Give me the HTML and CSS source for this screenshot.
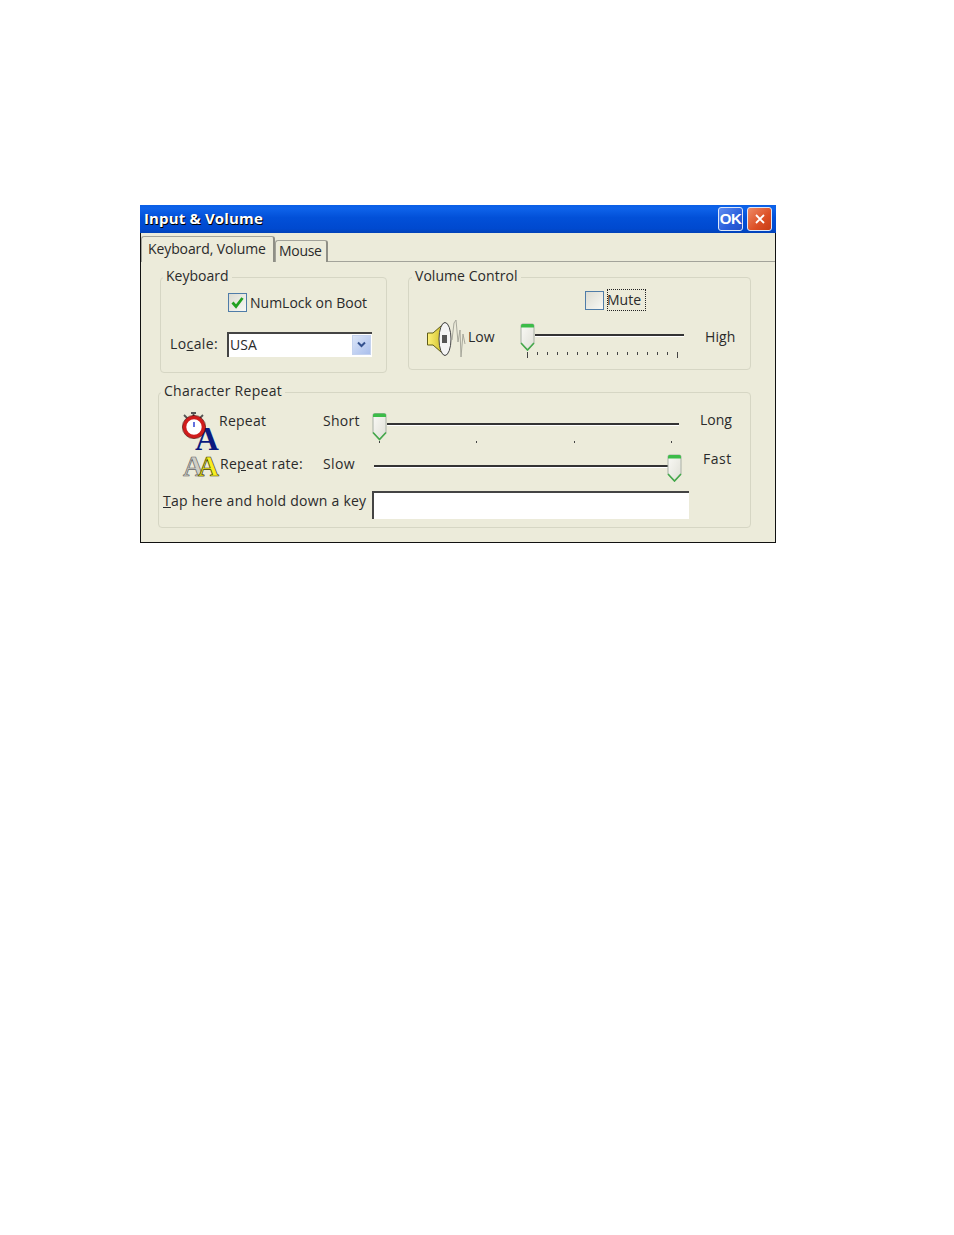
FILE: index.html
```html
<!DOCTYPE html>
<html lang="en">
<head>
<meta charset="utf-8">
<title>Input &amp; Volume</title>
<link rel="stylesheet" href="styles.css">
</head>
<body>
<svg class="defs" width="0" height="0">
  <defs>
    <linearGradient id="cone" x1="0" y1="0" x2="1" y2="0">
      <stop offset="0" stop-color="#fff27a"/>
      <stop offset="1" stop-color="#c9b81e"/>
    </linearGradient>
    <linearGradient id="thumbfill" x1="0" y1="0" x2="1" y2="1">
      <stop offset="0" stop-color="#fafaf6"/>
      <stop offset="1" stop-color="#dfdfd6"/>
    </linearGradient>
    <symbol id="thumb-shape" viewBox="0 0 15 28">
      <path d="M2.5 1 H12.5 Q14 1 14 2.5 V20 L7.5 27 L1 20 V2.5 Q1 1 2.5 1 Z" fill="url(#thumbfill)" stroke="#a9b0a6"/>
      <path d="M2.5 1 H12.5 Q14 1 14 2.5 V4.5 H1 V2.5 Q1 1 2.5 1 Z" fill="#3cbc48"/>
      <path d="M1 20 L7.5 27 L14 20" fill="none" stroke="#45a84c" stroke-width="1.7"/>
    </symbol>
  </defs>
</svg>
<main class="window">
  <header class="titlebar">
    <h1 class="title">Input &amp; Volume</h1>
    <div class="ok-btn">OK</div>
    <div class="close-btn">
      <svg width="12" height="12" viewBox="0 0 12 12"><path d="M2 2 L10 10 M10 2 L2 10" stroke="#fff" stroke-width="1.8" fill="none"/></svg>
    </div>
  </header>

  <nav class="tabs">
    <div class="tab tab-active">Keyboard, Volume</div>
    <div class="tab tab-plain">Mouse</div>
  </nav>

  <section class="panel">
    <div class="top-row">
      <fieldset class="group group-keyboard">
        <legend>Keyboard</legend>
        <div class="check-row numlock">
          <span class="checkbox">
            <svg width="15" height="15" viewBox="0 0 15 15"><path d="M2.5 7.5 L6 11.5 L12.5 3" stroke="#21a121" stroke-width="2.8" fill="none"/></svg>
          </span>
          <span class="check-label">NumLock on Boot</span>
        </div>
        <div class="locale-row">
          <span class="locale-label">Lo<u>c</u>ale:</span>
          <div class="combo">
            <span class="combo-value">USA</span>
            <span class="combo-btn">
              <svg width="9" height="7" viewBox="0 0 9 7"><path d="M1 1.5 L4.5 5 L8 1.5" stroke="#33518f" stroke-width="2" fill="none"/></svg>
            </span>
          </div>
        </div>
      </fieldset>

      <fieldset class="group group-volume">
        <legend>Volume Control</legend>
        <div class="mute-row">
          <span class="checkbox"></span>
          <span class="mute-label">Mute</span>
        </div>
        <div class="volume-row">
          <svg class="speaker" width="39" height="38" viewBox="0 0 39 38">
            <path d="M0.5 13 L6 13 L18 2.5 L18 35.5 L6 25 L0.5 25 Z" fill="url(#cone)" stroke="#5f5c18"/>
            <ellipse cx="18" cy="19" rx="6" ry="16.5" fill="#f4f4f4" stroke="#444"/>
            <rect x="15" y="15" width="5" height="8" fill="#555"/>
            <path d="M25 20 L27 3 L29 0 L31 22 L33 10 L34 37 L36 14 L38 24" stroke="#a8a89c" fill="none"/>
          </svg>
          <span class="label low">Low</span>
          <div class="slider slider-volume">
            <div class="track"></div>
            <svg class="thumb" width="15" height="28"><use href="#thumb-shape"/></svg>
            <div class="ticks ticks-volume">
              <i class="tick tick-long"></i><i class="tick"></i><i class="tick"></i><i class="tick"></i><i class="tick"></i><i class="tick"></i><i class="tick"></i><i class="tick"></i><i class="tick"></i><i class="tick"></i><i class="tick"></i><i class="tick"></i><i class="tick"></i><i class="tick"></i><i class="tick"></i><i class="tick tick-long"></i>
            </div>
          </div>
          <span class="label high">High</span>
        </div>
      </fieldset>
    </div>

    <fieldset class="group group-char">
      <legend>Character Repeat</legend>
      <div class="char-row row-repeat">
        <svg class="icon-repeat" width="38" height="38" viewBox="0 0 38 38">
          <text x="14" y="38" class="icon-a icon-a-blue">A</text>
          <path d="M6 6 L3 3 M19 6 L22 3 M12.5 4 V0 M10 1 H15" stroke="#555" stroke-width="1.8" fill="none"/>
          <circle cx="13" cy="15" r="9.5" fill="#fff" stroke="#d01c1c" stroke-width="3.6"/>
          <circle cx="13" cy="15" r="11.6" fill="none" stroke="#500" stroke-width="0.7"/>
          <path d="M13 10 V15" stroke="#2035d0" stroke-width="1.4"/>
        </svg>
        <span class="label repeat-name">Repeat</span>
        <span class="label short">Short</span>
        <div class="slider slider-char">
          <div class="track track-short"></div>
          <svg class="thumb" width="15" height="29"><use href="#thumb-shape"/></svg>
          <div class="ticks ticks-char">
            <i class="dot"></i><i class="dot"></i><i class="dot"></i><i class="dot"></i>
          </div>
        </div>
        <span class="label long">Long</span>
      </div>

      <div class="char-row row-rate">
        <svg class="icon-rate" width="37" height="24" viewBox="0 0 37 24">
          <text x="0" y="22" class="icon-a icon-a-grey">A</text>
          <text x="15" y="22" class="icon-a icon-a-yellow">A</text>
        </svg>
        <span class="label rate-name">Re<u>p</u>eat rate:</span>
        <span class="label slow">Slow</span>
        <div class="slider slider-char">
          <div class="track track-rate"></div>
          <svg class="thumb thumb-end" width="15" height="28"><use href="#thumb-shape"/></svg>
        </div>
        <span class="label fast">Fast</span>
      </div>

      <div class="char-row row-tap">
        <span class="label tap-label"><u>T</u>ap here and hold down a key</span>
        <div class="tap-input"></div>
      </div>
    </fieldset>
  </section>
</main>
</body>
</html>
```
FILE: styles.css
```css
* { box-sizing: border-box; }
html, body { margin: 0; padding: 0; background: #fff; }
body {
  height: 1235px;
  overflow: hidden;
  font-family: "Open Sans", "Liberation Sans", sans-serif;
  font-size: 14px;
  line-height: 18px;
  color: #2a2a2a;
}
.defs { position: absolute; }
.window {
  width: 636px;
  height: 338px;
  margin: 205px 0 0 140px;
  background: #ecebda;
  border: 1px solid #111;
  border-top: 0;
  display: flex;
  flex-direction: column;
}
.titlebar {
  height: 28px;
  margin: 0 -1px;
  display: flex;
  align-items: center;
  padding: 0 4px;
  background:
    linear-gradient(180deg, #0a5fe6 0%, #0e63ea 12%, #0250d8 45%, #0049cf 85%, #0242b8 100%);
}
.title {
  flex: 1;
  margin: 0 0 2px;
  font-family: "Open Sans", "Liberation Sans", sans-serif;
  font-size: 15px;
  font-weight: 700;
  letter-spacing: .15px;
  color: #fff;
  text-shadow: 1px 1px 0 #000, 0 1px 0 #001a60;
}
.ok-btn, .close-btn {
  width: 25px;
  height: 24px;
  border: 1px solid #dfe8f8;
  border-radius: 3px;
  display: flex;
  align-items: center;
  justify-content: center;
}
.ok-btn {
  background: linear-gradient(135deg, #5f8cf0, #2a5fdc 60%, #2250c8);
  color: #fff;
  font-family: "Liberation Sans", sans-serif;
  font-weight: 700;
  font-size: 15px;
  letter-spacing: -.4px;
  margin-right: 4px;
}
.close-btn { background: linear-gradient(135deg, #ee8a66, #dc4f25 60%, #c73c15); }

.tabs {
  height: 29px;
  display: flex;
  align-items: flex-end;
  border-bottom: 1px solid #a3a39a;
}
.tab {
  background: #ecebda;
  border: 1px solid #a3a39a;
  border-bottom: 0;
  border-radius: 3px 3px 0 0;
  margin-bottom: -1px;
}
.tab-active {
  width: 134px;
  height: 26px;
  padding: 3px 0 0 6px;
  letter-spacing: -.1px;
  border-right: 2px solid #8f8f86;
}
.tab-plain {
  width: 53px;
  height: 22px;
  padding: 1px 0 0 3px;
  letter-spacing: -.3px;
  border-right: 2px solid #8f8f86;
}

.panel { flex: 1; padding: 6px 0 0 17px; }
.top-row { display: flex; align-items: flex-start; margin-left: 2px; }

.group {
  margin: 0;
  padding: 0;
  min-width: 0;
  border: 1px solid #d6d6c4;
  border-radius: 4px;
}
.group legend {
  padding: 0 3px;
  line-height: 15px;
  height: 19px;
}
.group-keyboard { width: 227px; height: 105px; }
.group-keyboard legend { margin-left: 2px; }
.group-volume { width: 343px; height: 102px; margin-left: 21px; }
.group-volume legend { margin-left: 3px; letter-spacing: .05px; }
.group-char { width: 593px; margin-top: 10px; padding-bottom: 8px; }
.group-char legend { margin-left: 2px; letter-spacing: .3px; }

.checkbox {
  width: 19px;
  height: 19px;
  flex: none;
  display: flex;
  align-items: center;
  justify-content: center;
  border: 1px solid #4f7ca8;
  background: linear-gradient(135deg, #dcdcd2, #f8f8f4);
}
.numlock { display: flex; align-items: center; margin: 6px 0 0 67px; }
.check-label { margin-left: 3px; }
.locale-row { display: flex; align-items: center; margin-top: 20px; padding-left: 9px; }
.locale-label { width: 57px; padding-bottom: 2px; letter-spacing: .4px; }
.combo {
  width: 145px;
  height: 25px;
  display: flex;
  align-items: center;
  justify-content: space-between;
  background: #fff;
  border-top: 2px solid #444;
  border-left: 2px solid #444;
  padding: 0 1px 2px 1px;
}
.combo-btn {
  width: 19px;
  height: 20px;
  display: flex;
  align-items: center;
  justify-content: center;
  background: linear-gradient(135deg, #dbe5f8, #aabfec);
  border: 1px solid #c4d2ee;
}

.mute-row { display: flex; align-items: center; margin: 2px 0 0 176px; }
.mute-label {
  width: 39px;
  height: 22px;
  margin-left: 3px;
  line-height: 20px;
  text-indent: -1px;
  border: 1px dotted #222;
}
.volume-row { display: flex; align-items: flex-start; margin: 9px 0 0 18px; }
.speaker { flex: none; }
.label { flex: none; }
.low { width: 51px; margin-left: 2px; padding-top: 8px; }
.high { margin-left: 21px; padding-top: 8px; letter-spacing: .1px; }

.slider { position: relative; flex: none; }
.slider-volume { width: 165px; height: 38px; }
.slider-char { width: 308px; }
.track {
  height: 3px;
  border-top: 2px solid #333;
  border-bottom: 1px solid #fff;
}
.slider-volume .track { margin: 14px 0 0 16px; }
.thumb { position: absolute; left: 1px; top: 3px; }
.ticks { display: flex; justify-content: space-between; }
.ticks-volume { margin: 15px 0 0 8px; width: 151px; align-items: flex-start; }
.tick { display: block; width: 1px; height: 3px; background: #444; }
.tick-long { height: 6px; }

.char-row { display: flex; align-items: flex-start; }
.row-repeat { margin-top: 10px; padding-left: 22px; height: 38px; }
.row-rate { margin-top: 4px; padding-left: 24px; height: 28px; }
.row-tap { margin-top: 9px; padding-left: 4px; }
.icon-repeat, .icon-rate { flex: none; overflow: visible; }
.icon-a { font-family: "Liberation Serif", serif; font-weight: 700; }
.icon-a-blue { font-size: 33px; fill: #0b1a80; }
.icon-a-grey { font-size: 29px; fill: #cfcfc6; stroke: #666; stroke-width: .7px; }
.icon-a-yellow { font-size: 29px; fill: #f7ee20; stroke: #3d3a08; stroke-width: .7px; }
.repeat-name { width: 104px; letter-spacing: .25px; }
.short { width: 49px; letter-spacing: .3px; }
.long { margin: -1px 0 0 20px; }
.rate-name { width: 103px; padding-top: 1px; letter-spacing: .3px; }
.slow { width: 51px; padding-top: 1px; letter-spacing: .4px; }
.fast { margin: -4px 0 0 21px; letter-spacing: .5px; }
.track-short { margin: 11px 1px 0 15px; }
.track-rate { margin: 11px 14px 0 0; }
.row-repeat .thumb { left: 0; top: 0; }
.thumb-end { left: auto; right: 0; top: 0; }
.ticks-char { margin: 15px 8px 0 7px; }
.dot { display: block; width: 1px; height: 2px; background: #444; }
.tap-label { width: 209px; padding-top: 1px; letter-spacing: .25px; }
.tap-input {
  width: 317px;
  height: 28px;
  background: #fff;
  border-top: 2px solid #444;
  border-left: 2px solid #444;
}
```
